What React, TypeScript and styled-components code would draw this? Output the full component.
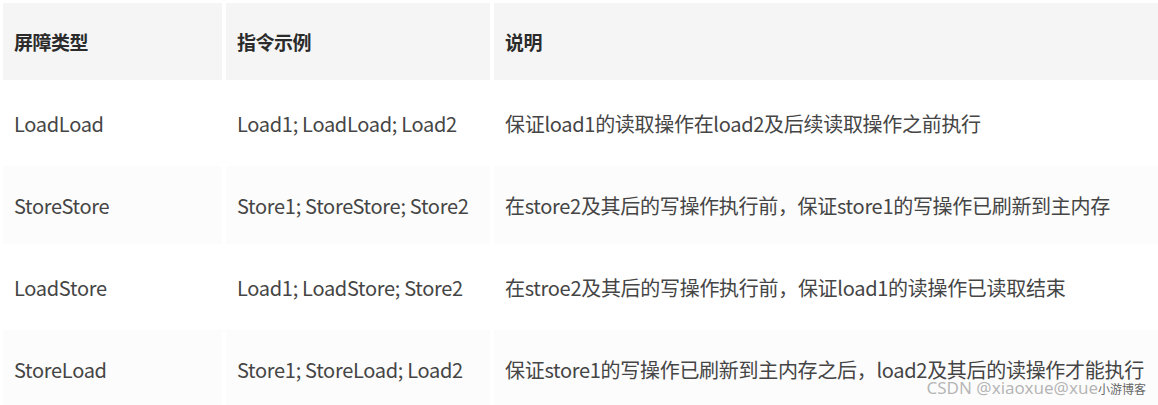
import React from 'react';
import styled, { createGlobalStyle } from 'styled-components';

const GlobalStyle = createGlobalStyle`
  html, body {
    margin: 0;
    padding: 0;
    background: #ffffff;
  }
  body {
    font-family: "Noto Sans CJK SC", "Noto Sans", sans-serif;
  }
`;

const Page = styled.div`
  position: relative;
  width: 1158px;
  height: 405px;
  overflow: hidden;
  padding: 3px 0 0 3px;
  box-sizing: border-box;
  display: flex;
  flex-direction: column;
  row-gap: 4px;
`;

const Row = styled.div<{ $height: number }>`
  display: grid;
  grid-template-columns: 219px 264px 1fr;
  column-gap: 4px;
  height: ${(p) => p.$height}px;
  flex-shrink: 0;
`;

const Cell = styled.div<{ $head?: boolean; $striped?: boolean }>`
  display: flex;
  align-items: center;
  padding-left: 11px;
  background: ${(p) => (p.$head ? '#f5f5f5' : p.$striped ? '#fcfcfc' : '#ffffff')};
  color: ${(p) => (p.$head ? '#2b2b2b' : '#454545')};
  font-size: ${(p) => (p.$head ? '19px' : '20px')};
  font-weight: ${(p) => (p.$head ? 700 : 400)};
  white-space: nowrap;
  letter-spacing: ${(p) => (p.$head ? '-0.5px' : '-0.3px')};
`;

const Watermark = styled.div`
  position: absolute;
  right: 12px;
  bottom: 6px;
  color: rgba(150, 150, 150, 0.7);
  font-size: 17px;
  font-family: "Noto Sans", "Noto Sans CJK SC", sans-serif;
  white-space: nowrap;

  span {
    font-size: 12px;
    color: #666;
  }
`;

const head = ['屏障类型', '指令示例', '说明'];

const rows = [
  ['LoadLoad', 'Load1; LoadLoad; Load2', '保证load1的读取操作在load2及后续读取操作之前执行'],
  ['StoreStore', 'Store1; StoreStore; Store2', '在store2及其后的写操作执行前，保证store1的写操作已刷新到主内存'],
  ['LoadStore', 'Load1; LoadStore; Store2', '在stroe2及其后的写操作执行前，保证load1的读操作已读取结束'],
  ['StoreLoad', 'Store1; StoreLoad; Load2', '保证store1的写操作已刷新到主内存之后，load2及其后的读操作才能执行'],
];

export default function App() {
  return (
    <>
      <GlobalStyle />
      <Page>
        <Row $height={77}>
          {head.map((h) => (
            <Cell key={h} $head>{h}</Cell>
          ))}
        </Row>
        {rows.map((r, i) => (
          <Row key={r[0]} $height={78}>
            {r.map((c) => (
              <Cell key={c} $striped={i % 2 === 1}>{c}</Cell>
            ))}
          </Row>
        ))}
        <Watermark>CSDN @xiaoxue@xue<span>小游博客</span></Watermark>
      </Page>
    </>
  );
}
